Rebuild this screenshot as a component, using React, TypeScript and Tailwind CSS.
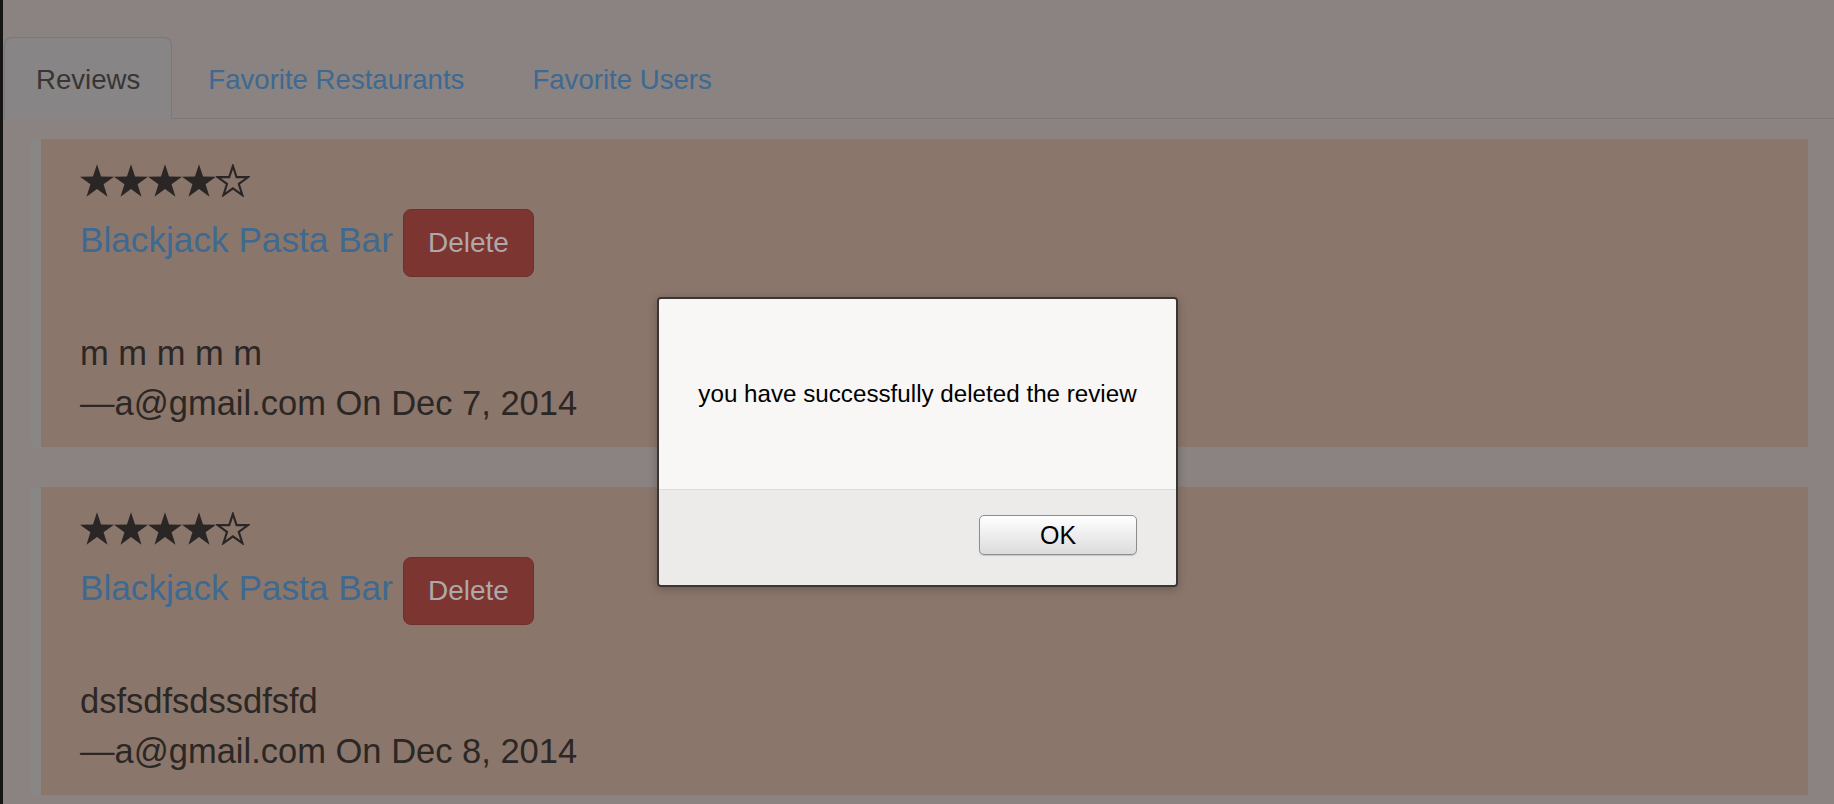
import React from 'react';

const STAR = '17,0.3 21.06,12.62 34,12.67 23.56,20.33 27.52,32.68 17,25.1 6.48,32.68 10.44,20.33 0,12.67 12.94,12.62';

function Star({ filled }: { filled: boolean }) {
  return (
    <svg width="34" height="33" viewBox="0 0 34 33" className="block">
      {filled ? (
        <polygon points={STAR} fill="#2a2625" />
      ) : (
        <polygon
          points={STAR}
          fill="none"
          stroke="#2a2625"
          strokeWidth="2.4"
          strokeLinejoin="miter"
          transform="translate(1.6 1.7) scale(0.9)"
        />
      )}
    </svg>
  );
}

type Review = { rating: number; restaurant: string; text: string; author: string; date: string };

const reviews: Review[] = [
  { rating: 4, restaurant: 'Blackjack Pasta Bar', text: 'm m m m m', author: 'a@gmail.com', date: 'Dec 7, 2014' },
  { rating: 4, restaurant: 'Blackjack Pasta Bar', text: 'dsfsdfsdssdfsfd', author: 'a@gmail.com', date: 'Dec 8, 2014' },
];

function ReviewCard({ review }: { review: Review }) {
  return (
    <div className="ml-[28px] mr-[26px] border-l-[10px] border-[#898686] bg-[#8b766b] pl-[39px] pt-[25px] pb-[19px]">
      <div className="flex h-[32px]">
        {[0, 1, 2, 3, 4].map(i => (
          <Star key={i} filled={i < review.rating} />
        ))}
      </div>
      <div className="mt-[13px] flex items-baseline">
        <a className="text-[35.2px] leading-[50px] text-[#3e6991]">{review.restaurant}</a>
        <button className="ml-[10px] rounded-[8px] border border-[#712f2b] bg-[#7d3531] px-[24px] py-[13px] text-[28px] leading-[40px] text-[#aea8ab]">
          Delete
        </button>
      </div>
      <div className="mt-[51px] text-[34.5px] leading-[50px] text-[#2b2725]">
        <p>{review.text}</p>
        <p>
          —{review.author} On {review.date}
        </p>
      </div>
    </div>
  );
}

export default function App() {
  return (
    <div className="relative h-[804px] w-full overflow-hidden border-l-[3px] border-[#151515] bg-[#8a8381] font-['Liberation_Sans',Arial,sans-serif]">
      <div className="pt-[37px]">
        <ul className="flex border-b border-[#7a7878] pl-[1px]">
          <li className="-mb-px mr-[4px]">
            <a className="block rounded-t-[8px] border border-[#7a7878] border-b-transparent bg-[#878585] px-[31px] pt-[22px] pb-[18px] text-[27.6px] leading-[40px] text-[#393533]">
              Reviews
            </a>
          </li>
          <li className="-mb-px mr-[4px]">
            <a className="block rounded-t-[8px] border border-transparent px-[31px] pt-[22px] pb-[18px] text-[27.6px] leading-[40px] text-[#3e6991]">
              Favorite Restaurants
            </a>
          </li>
          <li className="-mb-px mr-[4px]">
            <a className="block rounded-t-[8px] border border-transparent px-[31px] pt-[22px] pb-[18px] text-[27.6px] leading-[40px] text-[#3e6991]">
              Favorite Users
            </a>
          </li>
        </ul>

        <div className="mt-[20px] flex flex-col gap-[40px]">
          {reviews.map((r, i) => (
            <ReviewCard key={i} review={r} />
          ))}
        </div>
      </div>

      {/* alert dialog */}
      <div className="absolute left-[654px] top-[297px] flex h-[290px] w-[521px] flex-col overflow-hidden rounded-[4px] border-2 border-[#3a3634] shadow-[0_2px_10px_rgba(0,0,0,0.25)]">
        <div className="flex h-[190px] items-center justify-center bg-[#f8f7f5] text-[24.2px] text-black">
          you have successfully deleted the review
        </div>
        <div className="flex flex-1 justify-end border-t border-[#dcdbd9] bg-[#ecebe9] pr-[39px] pt-[25px]">
          <button className="h-[40px] w-[158px] rounded-[5px] border border-[#8e8e8e] bg-gradient-to-b from-white to-[#dcdcdc] text-[25px] leading-none text-black shadow-[0_1px_1px_rgba(0,0,0,0.15)]">
            OK
          </button>
        </div>
      </div>
    </div>
  );
}
